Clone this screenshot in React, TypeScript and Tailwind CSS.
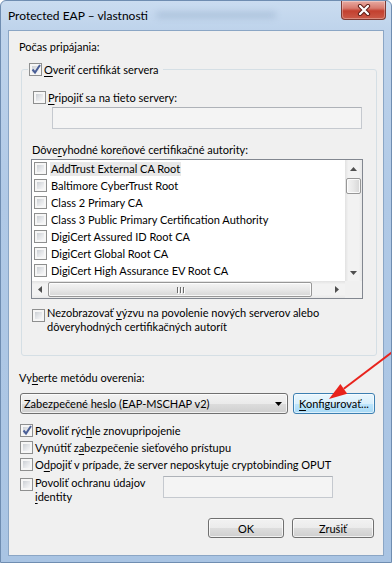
import React from "react";

function U({ children }: { children: React.ReactNode }) {
  return <span className="underline underline-offset-[2px] decoration-[1px]">{children}</span>;
}

function Check({ checked = false }: { checked?: boolean }) {
  return (
    <span className="relative block w-[13px] h-[13px] shrink-0 border border-[#8e8f8f] bg-[#f6f6f6] p-[2px]">
      <span className="block w-full h-full bg-[linear-gradient(135deg,#cbcfd4_0%,#e3e5e8_50%,#f7f7f8_100%)]" />
      {checked && (
        <svg className="absolute left-[0px] top-[-2px]" width="13" height="14" viewBox="0 0 13 14">
          <path d="M2.5 7.5 L5 10.5 L10 3" fill="none" stroke="#4a5f97" strokeWidth="2" />
        </svg>
      )}
    </span>
  );
}

function CloseButton() {
  return (
    <div className="ml-auto mr-[5px] w-[45px] h-[19px] rounded-b-[4px] border border-t-0 border-[#7d3a33] bg-[linear-gradient(to_bottom,#e8aba2_0%,#d77a6e_40%,#c3402f_55%,#cb5a48_100%)] shadow-[inset_0_0_0_1px_rgba(255,255,255,0.3)] flex items-center justify-center">
      <svg width="14" height="12" viewBox="0 0 14 12">
        <path d="M3 2 L11 10 M11 2 L3 10" stroke="#5e1d16" strokeWidth="4.2" strokeLinecap="round" />
        <path d="M3 2 L11 10 M11 2 L3 10" stroke="#ffffff" strokeWidth="2.3" strokeLinecap="round" />
      </svg>
    </div>
  );
}

function TriUp() {
  return (
    <svg width="7" height="4" viewBox="0 0 7 4">
      <polygon points="3.5,0 7,4 0,4" fill="#4f4f4f" />
    </svg>
  );
}
function TriDown({ color = "#4f4f4f" }: { color?: string }) {
  return (
    <svg width="7" height="4" viewBox="0 0 7 4">
      <polygon points="0,0 7,0 3.5,4" fill={color} />
    </svg>
  );
}
function TriLeft() {
  return (
    <svg width="4" height="7" viewBox="0 0 4 7">
      <polygon points="4,0 4,7 0,3.5" fill="#4f4f4f" />
    </svg>
  );
}
function TriRight() {
  return (
    <svg width="4" height="7" viewBox="0 0 4 7">
      <polygon points="0,0 4,3.5 0,7" fill="#4f4f4f" />
    </svg>
  );
}

const certs = [
  "AddTrust External CA Root",
  "Baltimore CyberTrust Root",
  "Class 2 Primary CA",
  "Class 3 Public Primary Certification Authority",
  "DigiCert Assured ID Root CA",
  "DigiCert Global Root CA",
  "DigiCert High Assurance EV Root CA",
];

function Listbox() {
  return (
    <div className="ml-[9px] mt-[2px] w-[332px] h-[140px] shrink-0 border border-[#828790] bg-white flex flex-col">
      <div className="flex h-[121px]">
        <div className="w-[313px] flex flex-col overflow-hidden">
          {certs.map((c, i) => (
            <div key={c} className="h-[17px] flex items-center pl-[2px] whitespace-nowrap">
              <Check />
              <span className={"ml-[3px] px-[1px] leading-[14px] " + (i === 0 ? "bg-[#e8e8e8]" : "")}>{c}</span>
            </div>
          ))}
        </div>
        <div className="w-[17px] flex flex-col bg-[linear-gradient(to_right,#e2e2e2_0%,#f2f2f2_20%,#f2f2f2_80%,#e8e8e8_100%)]">
          <div className="h-[17px] flex items-center justify-center">
            <TriUp />
          </div>
          <div className="mt-[1px] ml-[1px] w-[15px] h-[16px] rounded-[2px] border border-[#979797] bg-[linear-gradient(to_right,#f4f4f4_0%,#e8e8e8_50%,#d6d6d6_100%)] shadow-[inset_0_0_0_1px_rgba(255,255,255,0.8)]" />
          <div className="flex-1" />
          <div className="h-[17px] flex items-center justify-center">
            <TriDown />
          </div>
        </div>
      </div>
      <div className="flex h-[17px]">
        <div className="w-[313px] flex bg-[linear-gradient(to_bottom,#e2e2e2_0%,#f2f2f2_20%,#f2f2f2_80%,#e8e8e8_100%)]">
          <div className="w-[16px] flex items-center justify-center">
            <TriLeft />
          </div>
          <div className="w-[264px] my-[1px] rounded-[2px] border border-[#979797] bg-[linear-gradient(to_bottom,#f4f4f4_0%,#e8e8e8_50%,#d6d6d6_100%)] shadow-[inset_0_0_0_1px_rgba(255,255,255,0.8)] flex items-center justify-center gap-[2px]">
            <span className="w-[1px] h-[6px] bg-[#6b6b6b] shadow-[1px_1px_0_#ffffff]" />
            <span className="w-[1px] h-[6px] bg-[#6b6b6b] shadow-[1px_1px_0_#ffffff]" />
            <span className="w-[1px] h-[6px] bg-[#6b6b6b] shadow-[1px_1px_0_#ffffff]" />
          </div>
          <div className="w-[16px]" />
          <div className="w-[17px] flex items-center justify-center">
            <TriRight />
          </div>
        </div>
        <div className="w-[17px] bg-[#f0f0f0]" />
      </div>
    </div>
  );
}

const btnNormal =
  "h-[20px] rounded-[3px] border border-[#707070] bg-[linear-gradient(to_bottom,#f2f2f2_0%,#ebebeb_50%,#dddddd_51%,#cfcfcf_100%)] shadow-[inset_0_0_0_1px_rgba(255,255,255,0.7)] flex items-center justify-center";

export default function App() {
  return (
    <div className="relative w-[392px] h-[563px] overflow-hidden flex flex-col border border-[#6f8db1] rounded-t-[6px] bg-[linear-gradient(to_bottom,#cadcf0_0px,#bed3eb_30px,#b0c9e6_200px,#a9c4e3_100%)] font-['Lato',sans-serif] text-[11px] leading-[15px] text-black">
      <div className="h-[29px] flex items-start shrink-0">
        <span className="pl-[7px] pt-[7px] whitespace-nowrap text-[12px]">Protected EAP – vlastnosti</span>
        <span className="ml-[8px] mt-[11px] w-[120px] h-[6px] rounded-full bg-[#8aa3c2] opacity-40 blur-[3px]" />
        <CloseButton />
      </div>

      <div className="mx-[7px] h-[526px] shrink-0 border border-[#8ba6c5] bg-[#f0f0f0] flex flex-col">
        <div className="ml-[10px] mt-[8px]">Počas pripájania:</div>

        <fieldset className="ml-[12px] mt-[8px] w-[356px] h-[294px] shrink-0 border border-[#d5dfe5] rounded-[3px]">
          <legend className="ml-[6px] pl-[1px] pr-[4px]">
            <span className="flex items-center gap-[2px]">
              <Check checked />
              <span>
                <U>O</U>veriť certifikát servera
              </span>
            </span>
          </legend>
          <div className="flex flex-col">
            <div className="mt-[13px] ml-[11px] flex items-center gap-[2px]">
              <Check />
              <span>
                <U>P</U>ripojiť sa na tieto servery:
              </span>
            </div>
            <div className="mt-[2px] ml-[30px] w-[310px] h-[22px] border border-[#c5c9cf] border-t-[#aeb2b8] bg-[#f4f4f4]" />
            <div className="mt-[13px] ml-[10px]">
              Dôve<U>r</U>yhodné koreňové certifikačné autority:
            </div>
            <Listbox />
            <div className="mt-[7px] ml-[10px] flex items-start gap-[2px]">
              <span className="mt-[3px]">
                <Check />
              </span>
              <span className="leading-[14px]">
                Nezobrazovať <U>v</U>ýzvu na povolenie nových serverov alebo
                <br />
                dôveryhodných certifikačných autorít
              </span>
            </div>
          </div>
        </fieldset>

        <div className="ml-[10px] mt-[14px]">
          Vy<U>b</U>erte metódu overenia:
        </div>

        <div className="mt-[8px] ml-[11px] flex">
          <div className="w-[268px] h-[21px] rounded-[3px] border border-[#707070] bg-[linear-gradient(to_bottom,#f2f2f2_0%,#ebebeb_50%,#dddddd_51%,#cfcfcf_100%)] shadow-[inset_0_0_0_1px_rgba(255,255,255,0.7)] flex items-center justify-between pl-[3px] pr-[5px]">
            <span>Zabezpečené heslo (EAP-MSCHAP v2)</span>
            <TriDown color="#000000" />
          </div>
          <div className="ml-[5px] w-[82px] h-[21px] rounded-[3px] border border-[#3c7fb1] bg-[linear-gradient(to_bottom,#eaf6fd_0%,#d9f0fc_50%,#bee6fd_51%,#a7d9f5_100%)] shadow-[inset_0_0_0_1px_rgba(255,255,255,0.6)] flex items-center justify-center">
            <span>
              <U>K</U>onfigurovať...
            </span>
          </div>
        </div>

        <div className="mt-[8px] ml-[11px] flex flex-col">
          <div className="h-[17px] flex items-center gap-[2px]">
            <Check checked />
            <span>
              Povoliť rýc<U>h</U>le znovupripojenie
            </span>
          </div>
          <div className="h-[17px] flex items-center gap-[2px]">
            <Check />
            <span>
              Vynútiť z<U>a</U>bezpečenie sieťového prístupu
            </span>
          </div>
          <div className="h-[17px] flex items-center gap-[2px]">
            <Check />
            <span>
              O<U>d</U>pojiť v prípade, že server neposkytuje cryptobinding OPUT
            </span>
          </div>
        </div>

        <div className="mt-[3px] ml-[11px] flex items-start">
          <div className="w-[143px] flex items-start gap-[2px]">
            <span className="mt-[2px]">
              <Check />
            </span>
            <span className="leading-[14px] whitespace-nowrap">
              Povoliť ochranu údajov
              <br />
              <U>i</U>dentity
            </span>
          </div>
          <div className="w-[170px] h-[22px] border border-[#c5c9cf] border-t-[#aeb2b8] bg-[#f4f4f4]" />
        </div>

        <div className="mt-[14px] mr-[9px] flex justify-end gap-[8px]">
          <div className={btnNormal + " w-[76px]"}>OK</div>
          <div className={btnNormal + " w-[82px]"}>Zrušiť</div>
        </div>
      </div>

      <svg className="absolute left-0 top-0 pointer-events-none" width="392" height="563" viewBox="0 0 392 563">
        <line x1="402" y1="343" x2="342.8" y2="387.8" stroke="#e8231c" strokeWidth="2" />
        <polygon points="328,398 346.2,392.7 339.4,382.9" fill="#e8231c" />
      </svg>
    </div>
  );
}
